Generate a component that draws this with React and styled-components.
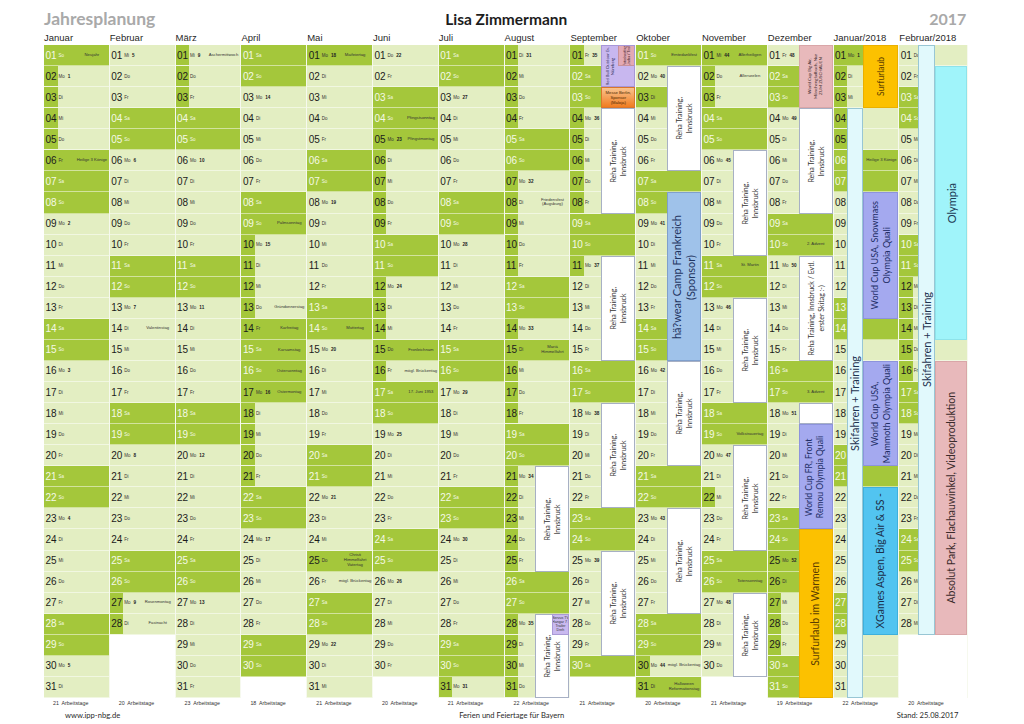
import React from 'react';
import styled, { createGlobalStyle } from 'styled-components';

const GREEN = '#a4c73b';
const PALE = '#e3eec2';

const GlobalStyle = createGlobalStyle`
  html, body { margin: 0; padding: 0; background: #fff; }
  body { font-family: "Liberation Sans", Arial, sans-serif; color: #222; }
`;

const DAYS = ['So', 'Mo', 'Di', 'Mi', 'Do', 'Fr', 'Sa'];

const MONTHS = [
  { name: 'Januar', y: 2017, m: 0, work: 21 },
  { name: 'Februar', y: 2017, m: 1, work: 20 },
  { name: 'März', y: 2017, m: 2, work: 23 },
  { name: 'April', y: 2017, m: 3, work: 18 },
  { name: 'Mai', y: 2017, m: 4, work: 21 },
  { name: 'Juni', y: 2017, m: 5, work: 20 },
  { name: 'Juli', y: 2017, m: 6, work: 21 },
  { name: 'August', y: 2017, m: 7, work: 22, cols: '30px 17px 1fr' },
  { name: 'September', y: 2017, m: 8, work: 21 },
  { name: 'Oktober', y: 2017, m: 9, work: 20 },
  { name: 'November', y: 2017, m: 10, work: 21 },
  { name: 'Dezember', y: 2017, m: 11, work: 19 },
  { name: 'Januar/2018', y: 2018, m: 0, work: 22, cols: '13.5px 16px 1fr' },
  { name: 'Februar/2018', y: 2018, m: 1, work: 20, cols: '18.5px 17px 1fr', wide: true },
];

const HOLIDAYS = new Set([
  '2017-1-1', '2017-1-6', '2017-4-14', '2017-4-16', '2017-4-17', '2017-5-1',
  '2017-5-25', '2017-6-4', '2017-6-5', '2017-6-15', '2017-8-15', '2017-10-3',
  '2017-10-31', '2017-11-1', '2017-12-25', '2017-12-26', '2018-1-1', '2018-1-6',
]);

const NOTES = {
  '2017-1-1': 'Neujahr',
  '2017-1-6': 'Heilige 3 Könige',
  '2017-2-14': 'Valentinstag',
  '2017-2-27': 'Rosenmontag',
  '2017-2-28': 'Fastnacht',
  '2017-3-1': 'Aschermittwoch',
  '2017-4-9': 'Palmsonntag',
  '2017-4-13': 'Gründonnerstag',
  '2017-4-14': 'Karfreitag',
  '2017-4-15': 'Karsamstag',
  '2017-4-16': 'Ostersonntag',
  '2017-4-17': 'Ostermontag',
  '2017-5-1': 'Maifeiertag',
  '2017-5-14': 'Muttertag',
  '2017-5-25': 'Christi Himmelfahrt Vatertag',
  '2017-5-26': 'mögl. Brückentag',
  '2017-6-4': 'Pfingstsonntag',
  '2017-6-5': 'Pfingstmontag',
  '2017-6-15': 'Fronleichnam',
  '2017-6-16': 'mögl. Brückentag',
  '2017-6-17': '17. Juni 1953',
  '2017-8-8': 'Friedensfest (Augsburg)',
  '2017-8-15': 'Mariä Himmelfahrt',
  '2017-10-1': 'Erntedankfest',
  '2017-10-30': 'mögl. Brückentag',
  '2017-10-31': 'Halloween Reformationstag',
  '2017-11-1': 'Allerheiligen',
  '2017-11-2': 'Allerseelen',
  '2017-11-11': 'St. Martin',
  '2017-11-19': 'Volkstrauertag',
  '2017-11-26': 'Totensonntag',
  '2017-12-10': '2. Advent',
  '2017-12-17': '3. Advent',
  '2018-1-6': 'Heilige 3 Könige',
};

// Schulferien Bayern
const FERIEN = [
  ['2017-01-02', '2017-01-05'],
  ['2017-02-27', '2017-03-03'],
  ['2017-04-10', '2017-04-22'],
  ['2017-06-06', '2017-06-16'],
  ['2017-07-29', '2017-09-11'],
  ['2017-10-30', '2017-11-03'],
  ['2017-11-22', '2017-11-22'],
  ['2017-12-23', '2018-01-05'],
  ['2018-02-12', '2018-02-16'],
].map(([a, b]) => [new Date(a + 'T00:00:00'), new Date(b + 'T00:00:00')]);

const isoWeek = (date) => {
  const t = new Date(Date.UTC(date.getFullYear(), date.getMonth(), date.getDate()));
  const day = t.getUTCDay() || 7;
  t.setUTCDate(t.getUTCDate() + 4 - day);
  const start = new Date(Date.UTC(t.getUTCFullYear(), 0, 1));
  return Math.ceil(((t - start) / 86400000 + 1) / 7);
};

const buildDays = (y, m) => {
  const len = new Date(y, m + 1, 0).getDate();
  return Array.from({ length: 31 }, (_, i) => {
    const d = i + 1;
    if (d > len) return null;
    const date = new Date(y, m, d);
    const wd = date.getDay();
    const key = `${y}-${m + 1}-${d}`;
    const weekend = wd === 0 || wd === 6;
    return {
      d,
      abbr: DAYS[wd],
      weekend,
      off: weekend || HOLIDAYS.has(key),
      ferien: FERIEN.some(([a, b]) => date >= a && date <= b),
      kw: wd === 1 || (d === 1 && !weekend) ? isoWeek(date) : null,
      note: NOTES[key],
    };
  });
};

const REHA = ['Reha Training,', 'Innsbruck'];

const KINDS = {
  reha: { bg: '#fff', line: '#a7b0c4', ink: '#333', size: 7, lh: 1.45 },
  blue: { bg: '#9fc2ea', line: '#7f9fcc', ink: '#1f3561', size: 11, lh: 1.25 },
  lav: { bg: '#a4a9ef', line: '#8d93dc', ink: '#222e66', size: 9, lh: 1.3 },
  gold: { bg: '#fcc100', line: '#eab000', ink: '#5b3d00', size: 10.5, lh: 1.2 },
  sky: { bg: '#52c4f0', line: '#3eb0dc', ink: '#1c2f4a', size: 10.5, lh: 1.2 },
  cyan: { bg: '#a0f4fa', line: '#8ee3ea', ink: '#1c3a55', size: 11, lh: 1.2 },
  rose: { bg: '#e8b9bb', line: '#d9a6a8', ink: '#3b2b2b', size: 10.5, lh: 1.2 },
  ice: { bg: '#e1f9fc', line: '#98c6d4', ink: '#1f3350', size: 11, lh: 1.2 },
  lilac: { bg: '#c9b9ef', line: '#a99ad6', ink: '#333', size: 3.6, lh: 1.15 },
  orange: { bg: 'linear-gradient(#f9c38e, #f07c20)', line: '#d9762c', ink: '#4a2600', size: 4.2, lh: 1.2 },
  blank: { bg: '#fff', line: '#a7b0c4', ink: '#333', size: 7, lh: 1.2 },
};

const EVENTS = {
  7: [
    { from: 21, to: 25, kind: 'reha', col: '2 / 4', lines: REHA },
    { from: 28, to: 31, kind: 'reha', col: '2 / 4', lines: REHA },
    { from: 28, to: 28, kind: 'lilac', col: '3', flat: ['Servus TV', 'Hangar 7 /', 'Trailer', 'Dreh'] },
  ],
  8: [
    { from: 1, to: 2, kind: 'redbull' },
    { from: 3, to: 3, kind: 'orange', flat: ['Messe Berlin,', 'Sponsor', '(Maloja)'] },
    { from: 4, to: 8, kind: 'reha', lines: REHA },
    { from: 11, to: 15, kind: 'reha', lines: REHA },
    { from: 18, to: 22, kind: 'reha', lines: REHA },
    { from: 25, to: 29, kind: 'reha', lines: REHA },
  ],
  9: [
    { from: 2, to: 6, kind: 'reha', lines: REHA },
    { from: 8, to: 15, kind: 'blue', lines: ['hä?wear Camp Frankreich', '(Sponsor)'] },
    { from: 16, to: 20, kind: 'reha', lines: REHA },
    { from: 23, to: 27, kind: 'reha', lines: REHA },
  ],
  10: [
    { from: 6, to: 10, kind: 'reha', lines: REHA },
    { from: 13, to: 17, kind: 'reha', lines: REHA },
    { from: 20, to: 24, kind: 'reha', lines: REHA },
    { from: 27, to: 30, kind: 'reha', lines: REHA },
  ],
  11: [
    { from: 1, to: 3, kind: 'rose', size: 4.4, lh: 1.25, lines: ['World Cup Big Air,', 'Mönchengladbach, Nur', 'ZUM ZUSCHAUEN'] },
    { from: 4, to: 8, kind: 'reha', lines: REHA },
    { from: 11, to: 15, kind: 'reha', lines: ['Reha Training, Innsbruck / Evtl.', 'erster Skitag :-)'] },
    { from: 18, to: 18, kind: 'blank', lines: [] },
    { from: 19, to: 23, kind: 'lav', size: 8.6, lines: ['World Cup  FR, Front', 'Remou Olympia Quali'] },
    { from: 24, to: 31, kind: 'gold', lines: ['Surfurlaub im Warmen'] },
  ],
  12: [
    { from: 4, to: 31, kind: 'ice', col: '2', lines: ['Skifahren + Training'] },
    { from: 1, to: 3, kind: 'gold', col: '3', size: 8.5, lines: ['Surfurlaub'] },
    { from: 8, to: 13, kind: 'lav', col: '3', lines: ['World Cup  USA, Snowmass', 'Olympia Quali'] },
    { from: 16, to: 20, kind: 'lav', col: '3', lines: ['World Cup  USA,', 'Mammoth Olympia Quali'] },
    { from: 22, to: 28, kind: 'sky', col: '3', lines: ['XGames Aspen, Big Air & SS -'] },
  ],
  13: [
    { from: 1, to: 28, kind: 'ice', col: '2', lines: ['Skifahren + Training'] },
    { from: 2, to: 14, kind: 'cyan', col: '3', lines: ['Olympia'] },
    { from: 16, to: 28, kind: 'rose', col: '3', lines: ['Absolut Park, Flachauwinkel, Videoproduktion'] },
  ],
};

const Page = styled.div`
  width: 924.4px;
  padding: 8px 0 0 44px;
  font-family: "Liberation Sans", Arial, sans-serif;
`;

const TitleBar = styled.div`
  display: grid;
  grid-template-columns: 1fr auto 1fr;
  align-items: end;
  height: 22px;
  font-family: Lato, "Open Sans", sans-serif;
  font-weight: 700;
`;

const Title = styled.div`
  font-size: 17.5px;
  color: #a9a9a9;
  line-height: 22px;
`;

const Owner = styled.div`
  font-size: 15.5px;
  color: #1d1d1d;
  line-height: 22px;
`;

const Year = styled.div`
  justify-self: end;
  margin-right: 2px;
  font-size: 16px;
  color: #a9a9a9;
  line-height: 22px;
`;

const Months = styled.div`
  display: flex;
`;

const Column = styled.div`
  flex: 0 0 ${(p) => (p.$wide ? '69px' : '65.8px')};
  display: flex;
  flex-direction: column;
  min-width: 0;
`;

const MonthLabel = styled.div`
  height: 15px;
  line-height: 16px;
  font-size: 9.5px;
  color: #1f1f1f;
  white-space: nowrap;
`;

const DayGrid = styled.div`
  display: grid;
  grid-template-columns: ${(p) => p.$cols};
  grid-template-rows: repeat(31, 1fr);
  height: 653px;
  border-right: 1px solid #f6f9ee;
`;

const Cell = styled.div`
  grid-column: 1 / -1;
  grid-row: ${(p) => p.$row};
  display: flex;
  align-items: stretch;
  min-width: 0;
  overflow: hidden;
  background: ${(p) => (p.$off ? GREEN : PALE)};
  border-bottom: 1px solid rgba(255, 255, 255, 0.5);
`;

const Blank = styled.div`
  grid-column: 1 / -1;
  grid-row: ${(p) => p.$row};
  background: #fff;
`;

const Num = styled.span`
  flex: 0 0 13.5px;
  display: flex;
  align-items: center;
  padding-left: 1.5px;
  box-sizing: border-box;
  font-size: 10px;
  letter-spacing: -0.1px;
  background: ${(p) => (p.$mark ? GREEN : 'transparent')};
  color: ${(p) => (p.$white ? '#f4f9e6' : '#1b1b1b')};
`;

const Meta = styled.span`
  flex: 0 0 16.5px;
  display: flex;
  align-items: center;
  gap: 3px;
  padding-left: 1px;
  font-size: 4.5px;
  color: ${(p) => (p.$white ? '#f4f9e6' : '#333')};
`;

const Week = styled.b`
  font-size: 4.6px;
  color: #222;
`;

const Note = styled.span`
  flex: 1;
  min-width: 0;
  display: flex;
  align-items: center;
  justify-content: center;
  text-align: center;
  font-size: 4.2px;
  line-height: 1.15;
  color: #333;
  overflow: hidden;
`;

const Box = styled.div`
  grid-column: ${(p) => p.$col};
  grid-row: ${(p) => p.$from} / ${(p) => p.$to + 1};
  z-index: 1;
  display: flex;
  align-items: center;
  justify-content: center;
  min-width: 0;
  min-height: 0;
  overflow: hidden;
  box-sizing: border-box;
  background: ${(p) => p.$bg};
  border: 1px solid ${(p) => p.$line};
`;

const SplitBox = styled(Box)`
  display: grid;
  grid-template-columns: 1fr 1fr;
  grid-template-rows: 1fr 1fr;
`;

const Tag = styled.div`
  grid-column: 2;
  grid-row: 1;
  display: flex;
  align-items: center;
  justify-content: center;
  background: #e3a9b3;
  border-left: 1px solid #c8919b;
  border-bottom: 1px solid #c8919b;
  overflow: hidden;
`;

const VText = styled.div`
  writing-mode: vertical-rl;
  transform: rotate(180deg);
  text-align: center;
  white-space: nowrap;
  place-self: center;
  font-family: Lato, "Open Sans", sans-serif;
  font-size: ${(p) => p.$size}px;
  line-height: ${(p) => p.$lh};
  color: ${(p) => p.$ink};
`;

const HText = styled.div`
  text-align: center;
  white-space: nowrap;
  font-family: "Liberation Sans", Arial, sans-serif;
  font-size: ${(p) => p.$size}px;
  line-height: ${(p) => p.$lh};
  color: ${(p) => p.$ink};
`;

const WorkDays = styled.div`
  height: 11px;
  line-height: 11px;
  padding-left: 9px;
  font-size: 5.3px;
  color: #333;
  white-space: pre;
`;

const Footer = styled.div`
  display: grid;
  grid-template-columns: 1fr auto 1fr;
  align-items: center;
  height: 12px;
  padding: 0 10px 0 21px;
  font-family: Lato, "Open Sans", sans-serif;
  font-size: 7.6px;
  color: #2a2a2a;
`;

const FooterRight = styled.span`
  justify-self: end;
`;

const lineBreaks = (lines) =>
  lines.map((l, i) => (
    <React.Fragment key={i}>
      {i > 0 && <br />}
      {l}
    </React.Fragment>
  ));

function EventBox({ ev, defaultCol }) {
  const col = ev.col || defaultCol;
  if (ev.kind === 'redbull') {
    return (
      <SplitBox $col={col} $from={ev.from} $to={ev.to} $bg="#c8b7ef" $line="#a797d8">
        <VText $size={4.2} $lh={1.2} $ink="#2a2a55" style={{ gridColumn: 1, gridRow: '1 / 3' }}>
          {lineBreaks(['Red Bull Outdoor Ev.', 'Nürnberg'])}
        </VText>
        <Tag>
          <VText $size={3.4} $lh={1.2} $ink="#4a2a30">
            {lineBreaks(['Fotoshooting', 'Lindau / Tirol'])}
          </VText>
        </Tag>
      </SplitBox>
    );
  }
  const k = KINDS[ev.kind];
  const size = ev.size || k.size;
  const lh = ev.lh || k.lh;
  return (
    <Box $col={col} $from={ev.from} $to={ev.to} $bg={k.bg} $line={k.line}>
      {ev.flat ? (
        <HText $size={size} $lh={lh} $ink={k.ink}>
          {lineBreaks(ev.flat)}
        </HText>
      ) : (
        ev.lines.length > 0 && (
          <VText $size={size} $lh={lh} $ink={k.ink}>
            {lineBreaks(ev.lines)}
          </VText>
        )
      )}
    </Box>
  );
}

function MonthColumn({ month, index }) {
  const days = buildDays(month.y, month.m);
  const events = EVENTS[index] || [];
  return (
    <Column $wide={month.wide}>
      <MonthLabel>{month.name}</MonthLabel>
      <DayGrid $cols={month.cols || '31px 1fr'}>
        {days.map((day, i) =>
          day ? (
            <Cell key={i} $row={i + 1} $off={day.off}>
              <Num $mark={day.ferien || day.off} $white={day.weekend}>
                {String(day.d).padStart(2, '0')}
              </Num>
              <Meta $white={day.weekend}>
                <span>{day.abbr}</span>
                {day.kw && <Week>{day.kw}</Week>}
              </Meta>
              <Note>{day.note}</Note>
            </Cell>
          ) : (
            <Blank key={i} $row={i + 1} />
          )
        )}
        {events.map((ev, i) => (
          <EventBox key={`e${i}`} ev={ev} defaultCol="2 / -1" />
        ))}
      </DayGrid>
      <WorkDays>{`${month.work}  Arbeitstage`}</WorkDays>
    </Column>
  );
}

export default function App() {
  return (
    <>
      <GlobalStyle />
      <Page>
        <TitleBar>
          <Title>Jahresplanung</Title>
          <Owner>Lisa Zimmermann</Owner>
          <Year>2017</Year>
        </TitleBar>
        <Months>
          {MONTHS.map((month, i) => (
            <MonthColumn key={month.name} month={month} index={i} />
          ))}
        </Months>
        <Footer>
          <span>www.ipp-nbg.de</span>
          <span>Ferien und Feiertage für Bayern</span>
          <FooterRight>Stand: 25.08.2017</FooterRight>
        </Footer>
      </Page>
    </>
  );
}
